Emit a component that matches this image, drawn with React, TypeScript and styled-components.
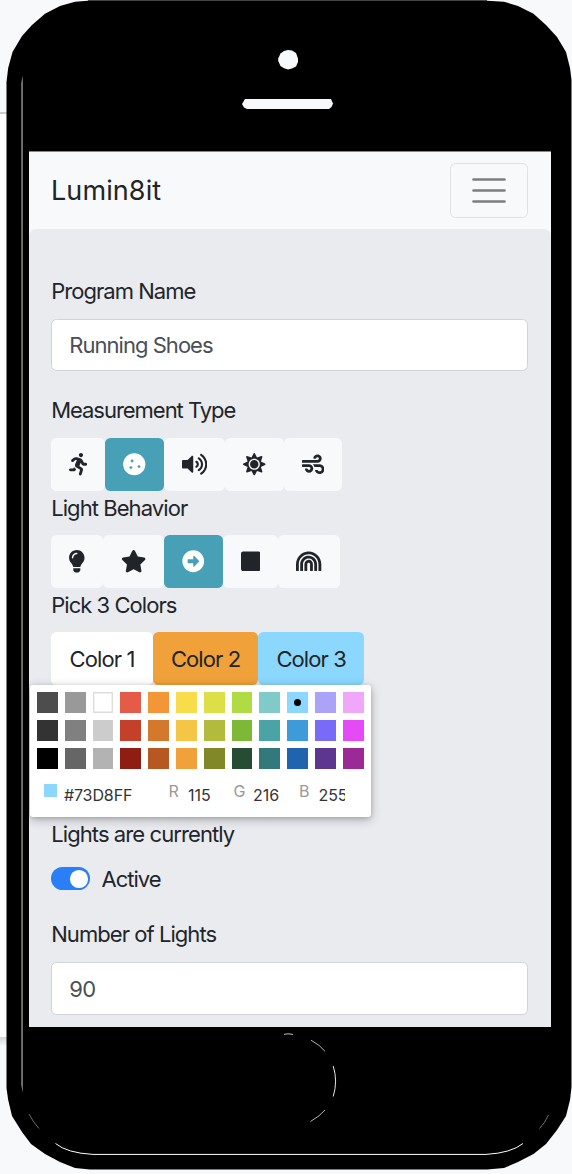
import React from 'react';
import styled, { createGlobalStyle } from 'styled-components';
import {
  FaRunning,
  FaVolumeUp,
  FaSun,
  FaWind,
  FaLightbulb,
  FaStar,
  FaArrowAltCircleRight,
  FaSquare,
  FaRainbow,
} from 'react-icons/fa';

const GlobalStyle = createGlobalStyle`
  * { box-sizing: border-box; }
  body {
    margin: 0;
    background: #f8f9fb;
    font-family: Inter, 'Liberation Sans', sans-serif;
    color: #212529;
  }
`;

const Page = styled.main`
  position: relative;
  width: 572px;
  height: 1174px;
  overflow: hidden;
  padding: 151px 21.5px 0 29px;
`;

const Frame = styled.svg`
  position: absolute;
  left: 0;
  top: 0;
`;

const Screen = styled.section`
  position: relative;
  height: 876px;
  overflow: hidden;
  background: #f8f9fb;
  box-shadow: inset 0 1px #85868a;
`;

const Navbar = styled.header`
  height: 78px;
  padding: 1px 22.5px 0 22px;
  display: flex;
  align-items: center;
  justify-content: space-between;
`;

const Brand = styled.span`
  font-size: 27px;
  letter-spacing: 0.1px;
  line-height: 40px;
`;

const Toggler = styled.button`
  width: 78px;
  height: 55.5px;
  padding: 0;
  border: 1.4px solid #e0e1e3;
  border-radius: 5.5px;
  background: transparent;
  display: grid;
  place-items: center;
`;

const Panel = styled.div`
  height: 798px;
  padding: 44.9px 22.5px 0 22.2px;
  border-radius: 7px 7px 0 0;
  background: #eaebef;
`;

const Label = styled.label<{ $track?: number }>`
  display: block;
  height: 33.7px;
  margin-bottom: 11px;
  font-size: 22px;
  line-height: 34.6px;
  letter-spacing: ${(p) => p.$track ?? -0.96}px;
  white-space: nowrap;
`;

const Input = styled.input<{ $track?: number }>`
  display: block;
  width: 100%;
  height: 52.4px;
  margin-bottom: 22.5px;
  padding: 1px 17px 0;
  border: 1.4px solid #ced4da;
  border-radius: 5.5px;
  background: #fff;
  color: #495057;
  font: 22px Inter, sans-serif;
  letter-spacing: ${(p) => p.$track ?? -0.5}px;
`;

const ButtonGroup = styled.div`
  display: flex;
  height: 52.4px;
`;

const IconButton = styled.button<{ $width: number; $active?: boolean }>`
  flex: none;
  display: flex;
  align-items: center;
  justify-content: center;
  width: ${(p) => p.$width}px;
  height: 52.4px;
  padding: 0;
  border: 0;
  border-radius: 5.5px;
  background: ${(p) => (p.$active ? '#48a0b7' : '#f8f9fb')};
  color: ${(p) => (p.$active ? '#fff' : '#212529')};
  svg { display: block; flex: none; width: ${(p) => p.$width - 36}px; height: 22.5px; }
`;

const ColorButton = styled.button<{ $bg: string; $width: number }>`
  width: ${(p) => p.$width}px;
  height: 52.6px;
  padding: 1px 0 0;
  border: 0;
  border-radius: 5.5px;
  background: ${(p) => p.$bg};
  color: #212529;
  font: 22px Inter, sans-serif;
  letter-spacing: -0.9px;
`;

const Picker = styled.div`
  position: relative;
  width: 341px;
  height: 132.3px;
  margin: 0.4px 0 0 -21.1px;
  padding: 7.3px 6.8px 0;
  border-radius: 3px;
  background: #fff;
  box-shadow: 0 3px 11px rgba(0, 0, 0, 0.24), 0 1px 4px rgba(0, 0, 0, 0.16);
`;

const Swatches = styled.div`
  display: grid;
  grid-template-columns: repeat(12, 20.9px);
  row-gap: 7px;
  column-gap: 6.93px;
`;

const Swatch = styled.div<{ $color: string }>`
  height: 21px;
  display: grid;
  place-items: center;
  background: ${(p) => p.$color};
  box-shadow: ${(p) => (p.$color === '#ffffff' ? 'inset 0 0 0 1.4px #ddd' : 'none')};
`;

const Dot = styled.span`
  width: 7px;
  height: 7px;
  border-radius: 50%;
  background: #000;
`;

const Fields = styled.div`
  display: grid;
  grid-template-columns: 20px 104.7px 19.5px 45.5px 19.5px 46px 19.5px 26px;
  margin: 14.6px 0 0 7px;
  height: 26px;
  font-size: 16px;
  line-height: 20px;
`;

const Preview = styled.span`
  width: 13px;
  height: 13px;
  background: #8bd7fd;
`;

const Channel = styled.span`
  margin-top: -3px;
  color: #999;
`;

const Value = styled.span`
  margin-top: 1.1px;
  color: #333;
  letter-spacing: -0.1px;
  overflow: hidden;
`;

const SwitchRow = styled.div`
  display: flex;
  align-items: center;
  height: 33.7px;
  margin-bottom: 21.7px;
`;

const Switch = styled.span`
  width: 39px;
  height: 23px;
  padding: 2.7px;
  border-radius: 12px;
  background: #2a7ef6;
  display: flex;
  justify-content: flex-end;
`;

const Knob = styled.span`
  width: 17.6px;
  height: 17.6px;
  border-radius: 50%;
  background: #fff;
`;

const SwitchLabel = styled.span`
  margin-left: 11.3px;
  padding-top: 1px;
  font-size: 22px;
  letter-spacing: -1px;
`;

const swatches = [
  '#4d4d4d', '#999999', '#ffffff', '#e45b48', '#f39638', '#f9dc4b', '#dddf48', '#afdb44', '#80cbc9', '#8bd7fd', '#aca3f8', '#f0a6f9',
  '#333333', '#808080', '#cccccc', '#c54028', '#d4792c', '#f5c645', '#b2bb3b', '#7db937', '#4aa3a4', '#3e9bd9', '#776bf7', '#e649f6',
  '#000000', '#666666', '#b3b3b3', '#8f1d12', '#b65821', '#f0a13a', '#808827', '#264d34', '#33787b', '#2063ae', '#5d378f', '#9b2a96',
];

const Ball = () => (
  <svg viewBox="0 0 22.5 22.5" fill="currentColor">
    <circle cx="11.25" cy="11.25" r="11.1" />
    <g fill="#48a0b7">
      <circle cx="9.1" cy="8" r="1.45" />
      <circle cx="7.9" cy="14.6" r="1.45" />
      <circle cx="16" cy="13.6" r="1.45" />
    </g>
  </svg>
);

const PhoneFrame = () => (
  <Frame width="572" height="1174" viewBox="0 0 572 1174">
    <defs>
      <linearGradient id="fade" x1="0" y1="0" x2="0" y2="1">
        <stop offset="0" stopColor="#d4d5d7" />
        <stop offset="1" stopColor="#f8f9fb" />
      </linearGradient>
    </defs>
    <rect y="112" width="22" height="926" fill="#fff" />
    <rect y="112" width="22" height="2" fill="#ccc" />
    <rect y="1037" width="22" height="9" fill="url(#fade)" />
    <path
      d="M88 .7 75 1.7 60 6 45 13.7 32 25 22 36 12.5 52 8.2 68 6.5 82V1088L8.2 1100 12 1116 22 1132 31 1144 45 1154 60 1162 75 1168 90 1169.5H487L504 1168 518 1162 533.5 1154 546 1144 557 1130 566 1116 570 1100 571.5 1087V80L570 68 566 52 557 37 546 25 533.5 13.7 518 6 504 1.7 487 .7Z"
      fill="#000"
    />
    <path d="M88 .5H487" stroke="#444" />
    <path d="M284 51 288 50 292 50.5 296 53 298 58.5V62L296 66.5 292 68.5 288 69.5 284 68.3 280.5 66 278.2 61V58.5L280.5 53.5Z" fill="#f8f9fb" />
    <path d="M245 99H331L333 103.5 331.5 107 329 109H247L244 107.5 242 104Z" fill="#f8f9fb" />
    <path d="M22.9 75 21.2 83V1085L22.9 1093Z" fill="#7f7c7c" />
    <g fill="none" stroke="#fff" strokeWidth="1">
      <path d="M284 1034.4 288 1033.8 293 1034.4" opacity=".75" />
      <path d="M311 1040.2Q320 1045 325 1051.3M325 1110Q320 1116 310.5 1121.5" opacity=".7" />
      <path d="M333.2 1066Q338 1081 333.2 1096.5" opacity=".9" />
      <path d="M55.5 1143.5Q67 1153 93 1154.4H486Q511 1153 523 1143.5" />
      <path d="M29 1114Q33 1122 39 1128.5M548.5 1115Q545 1123 539.5 1128.5" strokeWidth=".8" opacity=".55" />
    </g>
  </Frame>
);

export default function App() {
  return (
    <>
      <GlobalStyle />
      <Page>
        <PhoneFrame />
        <Screen>
          <Navbar>
            <Brand>Lumin8it</Brand>
            <Toggler aria-label="Menu">
              <svg width="34" height="26" stroke="#7d7d7e" strokeWidth="2.6" strokeLinecap="round">
                <path d="M1.5 1.5H32.5M1.5 12.5H32.5M1.5 23.5H32.5" />
              </svg>
            </Toggler>
          </Navbar>
          <Panel>
            <Label>Program Name</Label>
            <Input defaultValue="Running Shoes" $track={-0.96} />
            <Label $track={-1.03}>Measurement Type</Label>
            <ButtonGroup>
              <IconButton $width={54.3}><FaRunning /></IconButton>
              <IconButton $width={58.5} $active><Ball /></IconButton>
              <IconButton $width={61.3}><FaVolumeUp /></IconButton>
              <IconButton $width={58.5}><FaSun /></IconButton>
              <IconButton $width={58.5}><FaWind /></IconButton>
            </ButtonGroup>
            <Label $track={-0.93}>Light Behavior</Label>
            <ButtonGroup>
              <IconButton $width={51.6}><FaLightbulb /></IconButton>
              <IconButton $width={61.3}><FaStar /></IconButton>
              <IconButton $width={58.5} $active><FaArrowAltCircleRight /></IconButton>
              <IconButton $width={55.7}><FaSquare /></IconButton>
              <IconButton $width={61.3}><FaRainbow /></IconButton>
            </ButtonGroup>
            <Label>Pick 3 Colors</Label>
            <ButtonGroup>
              <ColorButton $bg="#fff" $width={101.6}>Color 1</ColorButton>
              <ColorButton $bg="#f0a13a" $width={105.6}>Color 2</ColorButton>
              <ColorButton $bg="#8bd7fd" $width={105.6}>Color 3</ColorButton>
            </ButtonGroup>
            <Picker>
              <Swatches>
                {swatches.map((color, i) => (
                  <Swatch key={color} $color={color}>{i === 9 && <Dot />}</Swatch>
                ))}
              </Swatches>
              <Fields>
                <Preview />
                <Value>#73D8FF</Value>
                <Channel>R</Channel>
                <Value>115</Value>
                <Channel>G</Channel>
                <Value>216</Value>
                <Channel>B</Channel>
                <Value>255</Value>
              </Fields>
            </Picker>
            <Label $track={-0.91}>Lights are currently</Label>
            <SwitchRow>
              <Switch><Knob /></Switch>
              <SwitchLabel>Active</SwitchLabel>
            </SwitchRow>
            <Label $track={-0.94}>Number of Lights</Label>
            <Input defaultValue="90" />
          </Panel>
        </Screen>
      </Page>
    </>
  );
}
